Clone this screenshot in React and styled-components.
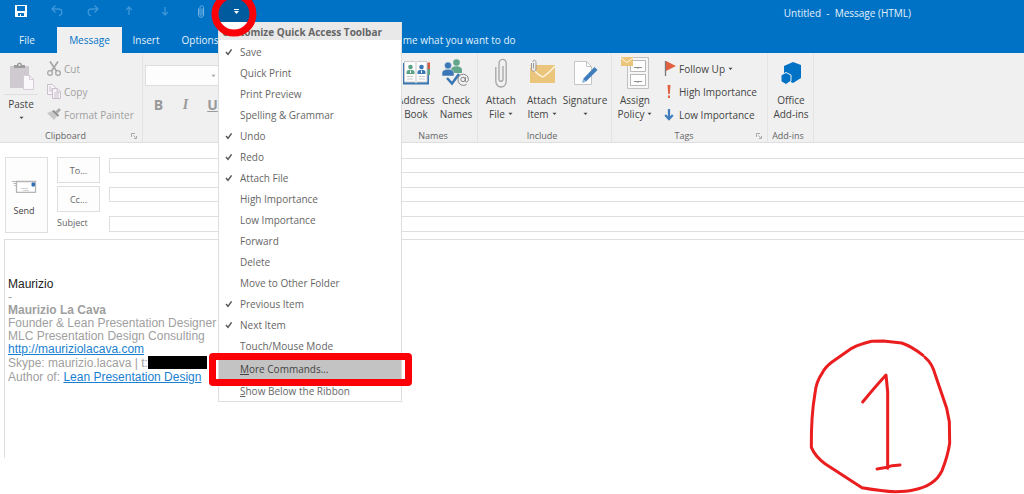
/**
 * Message Window
 * Compose window with the ribbon, address fields and the quick access menu open
 */
import React, { useState } from 'react';
import styled, { createGlobalStyle, ThemeProvider, css } from 'styled-components';

const theme = {
  colors: {
    blue: '#0072c6',
    blueDark: '#005a9e',
    ribbon: '#f0f0f0',
    line: '#dedede',
    text: '#444',
    muted: '#666',
    disabled: '#a0a0a0',
    link: '#1a7fd0',
    mark: '#fb0007',
  },
  fontSize: {
    sm: '9px',
    base: '10px',
  },
  font: '"Open Sans", "Noto Sans", sans-serif',
};

const GlobalStyle = createGlobalStyle`
  * {
    box-sizing: border-box;
  }

  body {
    margin: 0;
    background: #fff;
    font-family: ${props => props.theme.font};
    font-size: ${props => props.theme.fontSize.base};
    color: ${props => props.theme.colors.text};
  }

  button, input, select {
    font: inherit;
    color: inherit;
    margin: 0;
    padding: 0;
  }

  button {
    border: 0;
    background: none;
  }

  svg {
    display: block;
    flex: none;
  }
`;

const Page = styled.div`
  position: relative;
  display: flex;
  flex-direction: column;
  min-height: 100vh;
  padding-bottom: 36px;
  overflow: hidden;
`;

const TitleBar = styled.header`
  display: flex;
  height: 27px;
  padding-left: 3px;
  background: ${props => props.theme.colors.blue};
`;

const QuickButton = styled.button`
  display: flex;
  align-items: center;
  justify-content: center;
  width: 36px;
  height: 22px;
  color: ${props => (props.$dim ? '#3d97d9' : '#fff')};
`;

const MenuAnchor = styled.div`
  position: relative;
  z-index: 2;
`;

const MenuToggle = styled(QuickButton)`
  width: 34px;
  background: ${props => props.theme.colors.blueDark};
`;

const WindowTitle = styled.h1`
  margin: 0 113px 0 auto;
  font-size: ${props => props.theme.fontSize.base};
  line-height: 26px;
  font-weight: 400;
  color: #e4f1fb;
  white-space: pre;
`;

const Menu = styled.div`
  position: absolute;
  top: 22px;
  left: -1px;
  width: 184px;
  background: #fff;
  border: 1px solid ${props => props.theme.colors.line};
  border-top: 0;
`;

const MenuHeading = styled.div`
  height: 18px;
  margin-bottom: 1px;
  padding-left: 3px;
  background: #e9e9e9;
  font-weight: 700;
  line-height: 20px;
  white-space: nowrap;
  color: ${props => props.theme.colors.muted};
`;

const MenuItem = styled.button`
  position: relative;
  display: grid;
  grid-template-columns: 21px 1fr;
  align-items: center;
  width: 100%;
  height: 21px;
  text-align: left;
  color: ${props => props.theme.colors.muted};

  svg {
    margin-left: 6px;
  }

  span {
    grid-column: 2;
  }

  ${props => props.$active && css`
    margin: 3px 0 1px;
    height: 20px;
    background: #c3c3c3;
    color: #444;
  `}
`;

const MarkBox = styled.i`
  position: absolute;
  inset: -6px -11px -7px -10px;
  border: 7px solid ${props => props.theme.colors.mark};
  border-radius: 4px;
`;

const MarkRing = styled.svg`
  position: absolute;
  top: -9px;
  left: -8px;
  pointer-events: none;
`;

const Tabs = styled.nav`
  display: flex;
  height: 26px;
  padding-left: 7px;
  background: ${props => props.theme.colors.blue};
`;

const Tab = styled.button`
  width: ${props => props.$width}px;
  line-height: 26px;
  color: ${props => (props.$active ? props.theme.colors.blue : '#e4f1fb')};
  background: ${props => (props.$active ? props.theme.colors.ribbon : 'transparent')};

  &:first-child {
    margin-right: 10px;
  }
`;

const TellMe = styled.button`
  margin-left: 154px;
  line-height: 26px;
  white-space: nowrap;
  color: #e4f1fb;
`;

const RibbonBar = styled.section`
  display: flex;
  height: 90px;
  background: ${props => props.theme.colors.ribbon};
  border-bottom: 1px solid ${props => props.theme.colors.line};
`;

const Group = styled.div`
  display: flex;
  flex-direction: column;
  flex: none;
  width: ${props => props.$width}px;
  padding-top: 4px;
  border-right: 1px solid #e4e4e4;
`;

const GroupBody = styled.div`
  display: flex;
  flex: 1;
  padding: 0 2px;
`;

const GroupFooter = styled.div`
  display: flex;
  align-items: center;
  height: 13px;
  padding-right: 5px;
  font-size: ${props => props.theme.fontSize.sm};
  line-height: 13px;
  color: ${props => props.theme.colors.muted};

  span {
    flex: 1;
    text-align: center;
  }
`;

const BigButton = styled.button`
  display: flex;
  flex-direction: column;
  align-items: center;
  flex: none;
  width: ${props => props.$width || 42}px;
  line-height: 14px;
  white-space: nowrap;
`;

const IconBox = styled.span`
  display: flex;
  align-items: center;
  height: 32px;
  margin-bottom: 4px;
`;

const PasteButton = styled(BigButton)`
  ${IconBox} {
    height: 37px;
    margin-bottom: 0;
  }

  hr {
    width: 34px;
    margin: 0 0 2px;
    border: 0;
    border-top: 1px solid ${props => props.theme.colors.line};
  }
`;

const LabelLine = styled.span`
  display: flex;
  align-items: center;
  justify-content: center;
  gap: 3px;
  min-height: 14px;
`;

const SmallStack = styled.div`
  display: flex;
  flex-direction: column;
  padding-left: ${props => props.$indent}px;
`;

const SmallButton = styled.button`
  display: flex;
  align-items: center;
  gap: 3px;
  height: 23px;
  white-space: nowrap;
  color: ${props => (props.$disabled ? props.theme.colors.disabled : 'inherit')};
`;

const TextTools = styled.div`
  display: flex;
  flex-direction: column;
  padding-top: 8px;
`;

const FontSelect = styled.select`
  width: 86px;
  height: 21px;
  appearance: none;
  background: #fdfdfd;
  border: 1px solid ${props => props.theme.colors.line};
  border-radius: 0;
`;

const FontPicker = styled.div`
  display: grid;
  align-items: center;

  > * {
    grid-area: 1 / 1;
  }

  svg {
    margin-left: 66px;
    color: ${props => props.theme.colors.disabled};
  }
`;

const FormatRow = styled.div`
  display: flex;
  margin-top: 7px;

  button {
    width: 27px;
    font-size: 14px;
    font-weight: 700;
    line-height: 22px;
    color: #999;
  }

  i {
    font-family: "Liberation Serif", serif;
  }
`;

const Compose = styled.form`
  display: grid;
  grid-template-columns: 43px 43px 1fr;
  column-gap: 9px;
  padding: 14px 0 6px 5px;
`;

const outlined = css`
  background: #fdfdfd;
  border: 1px solid ${props => props.theme.colors.line};
`;

const SendButton = styled.button`
  ${outlined}
  display: flex;
  flex-direction: column;
  align-items: center;
  gap: 11px;
  height: 76px;
  padding-top: 22px;
  padding-right: 5px;
  font-size: ${props => props.theme.fontSize.sm};
  line-height: 14px;
`;

const Labels = styled.div`
  display: grid;
  grid-template-rows: 26px 26px 16px;
  row-gap: 3px;
`;

const FieldButton = styled.button`
  ${outlined}
  font-size: ${props => props.theme.fontSize.sm};
  color: ${props => props.theme.colors.muted};
`;

const FieldLabel = styled.label`
  font-size: ${props => props.theme.fontSize.sm};
  line-height: 16px;
  color: ${props => props.theme.colors.muted};
`;

const Fields = styled.div`
  display: grid;
  grid-template-rows: 15px 15px 16px;
  row-gap: 14px;
  padding-top: 1px;
`;

const Field = styled.input`
  width: 100%;
  min-width: 0;
  height: 100%;
  background: #fff;
  border: 1px solid ${props => props.theme.colors.line};
  border-right: 0;
  outline: none;
`;

const MessageBody = styled.main`
  flex: 1;
  margin-left: 4px;
  padding: 37px 0 0 3px;
  border: 1px solid ${props => props.theme.colors.line};
  border-width: 1px 0 0 1px;
  font-family: "Liberation Sans", Arial, sans-serif;
  font-size: 12px;
  line-height: 13px;
  color: #a0a0a0;

  p {
    margin: 0;
  }

  a {
    color: ${props => props.theme.colors.link};
  }
`;

const Greeting = styled.p`
  color: #222;
  line-height: 14px;
`;

const ContactLine = styled.p`
  line-height: 14px;
`;

const Redacted = styled.span`
  display: inline-block;
  width: 59px;
  height: 13px;
  background: #000;
  vertical-align: top;
`;

const PenDrawing = styled.svg`
  position: absolute;
  top: 320px;
  left: 790px;
  pointer-events: none;
`;

const Caret = () => (
  <svg width="5" height="4" viewBox="0 0 5 4" aria-hidden="true">
    <path d="M0.5 0.8h4L2.5 3z" fill="currentColor" />
  </svg>
);

const MenuCaret = () => (
  <svg width="5" height="5" viewBox="0 0 5 5" aria-hidden="true">
    <path d="M0 0h5v1H0zM0 2h5L2.500 5z" fill="#fff" />
  </svg>
);

const Check = () => (
  <svg width="8" height="8" viewBox="0 0 8 8" fill="none" stroke="#555" strokeWidth="1.5" aria-hidden="true">
    <path d="M1 4l2 2.4L6.6 1.4" />
  </svg>
);

const Launcher = () => (
  <svg width="6" height="6" viewBox="0 0 6 6" fill="none" stroke="#a8a8a8" aria-hidden="true">
    <path d="M0.5 4V0.5H4M2.5 2.5l2 2M5.5 3v2.5H3" />
  </svg>
);

const SaveIcon = () => (
  <svg width="12" height="12" viewBox="0 0 12 12" aria-hidden="true">
    <path fillRule="evenodd" d="M0 0h12v12H0zM2 1v5h8V1zM3 8v3h2V9h1v2h3V8z" fill="#fff" />
  </svg>
);

const UndoIcon = ({ flip }) => (
  <svg width="12" height="12" viewBox="0 0 12 12" fill="none" stroke="currentColor" strokeWidth="1.3" aria-hidden="true">
    <g transform={flip ? 'matrix(-1 0 0 1 12 0)' : undefined}>
      <path d="M4.5 0.5L1 4l3.5 3.5M1 4h6c5 0 5 5 1 7" />
    </g>
  </svg>
);

const ArrowIcon = ({ down }) => (
  <svg width="8" height="10" viewBox="0 0 8 10" fill="none" stroke="currentColor" strokeWidth="1.3" aria-hidden="true">
    <path d={down ? 'M4 1v8M1.2 6L4 9l2.8-3' : 'M4 9V1M1.2 4L4 1l2.8 3'} />
  </svg>
);

const SmallClipIcon = () => (
  <svg width="6" height="13" viewBox="0 0 6 13" fill="none" stroke="#6fb2e3" aria-hidden="true">
    <path d="M4 3.5v5.8a1 1 0 01-2 0V2.4C2 .2 5.5.2 5.5 2.4V10c0 3-5 3-5 0V3.5" />
  </svg>
);

const PasteIcon = () => (
  <svg width="26" height="28" viewBox="0 0 26 28" aria-hidden="true">
    <path d="M2 4h19v22H2z" fill="#cfcacf" />
    <path d="M6 6V3h3c0-3.500 5-3.500 5 0h3v3z" fill="#9c9c9c" />
    <circle cx="11.500" cy="3" r="1" fill="#f0f0f0" />
    <path d="M15.500 13.500h6l4 4v10h-10z" fill="#fbf8fc" stroke="#d4ccd6" />
    <path d="M21.500 13.500v4h4" fill="none" stroke="#d4ccd6" />
  </svg>
);

const CutIcon = () => (
  <svg width="14" height="15" viewBox="0 0 14 15" fill="none" stroke="#a6a6a6" strokeWidth="1.3" aria-hidden="true">
    <path d="M3 0.500l6.500 9.500M11 0.500L4.500 10" strokeWidth="1.700" />
    <circle cx="3" cy="12" r="2.300" />
    <circle cx="11" cy="12" r="2.300" />
  </svg>
);

const CopyIcon = () => (
  <svg width="14" height="15" viewBox="0 0 14 15" fill="#f7f3f8" stroke="#c9c0cb" aria-hidden="true">
    <path d="M0.500 0.500h5l3 3v7h-8z" />
    <path d="M2 5h4M2 7h4M2 3h2" />
    <path d="M5.500 4.500h5l3 3v7h-8z" />
    <path d="M7 9h5M7 11h5M7 13h5M10 5v3h3" />
  </svg>
);

const PainterIcon = () => (
  <svg width="14" height="13" viewBox="0 0 14 13" aria-hidden="true">
    <path d="M0 5l5-2 5 5-3 4z" fill="#c8c8c8" />
    <path d="M5 3l2-1 5 5-1 2z" fill="#8f8f8f" />
    <path d="M8.500 3.500L12 0l2 2-3.500 3.500z" fill="#aaa" />
  </svg>
);

const AddressIcon = () => (
  <svg width="28" height="26" viewBox="0 0 28 26" aria-hidden="true">
    <path d="M1 3h26v21.500H1z" fill="#3a78b5" />
    <path d="M25.500 2.500H28V9h-2.500z" fill="#dd5a3c" />
    <path d="M25.500 9H28v6h-2.500z" fill="#5aa384" />
    <path d="M2.500 1.500h10l1.500 1 1.500-1h9.500v20.500h-9.500l-1.500 1-1.500-1h-10z" fill="#fdfdfd" stroke="#c9c9c9" />
    <path d="M14 3v20M5 16.500h6M5 19h6M17 16.500h6M17 19h6" stroke="#c9c9c9" />
    <circle cx="8.500" cy="7" r="2.300" fill="#5aa384" />
    <path d="M4.500 14v-2c0-3 8-3 8 0v2z" fill="#5aa384" />
    <circle cx="19.500" cy="7" r="2.300" fill="#3a78b5" />
    <path d="M15.500 14v-2c0-3 8-3 8 0v2z" fill="#3a78b5" />
    <path d="M8 10.500h1V13H8zM19 10.500h1V13h-1z" fill="#fff" />
  </svg>
);

const CheckNamesIcon = () => (
  <svg width="28" height="28" viewBox="0 0 28 28" aria-hidden="true">
    <circle cx="14.500" cy="3.500" r="3.300" fill="#62a68b" />
    <path d="M9 14v-3c0-5 11-5 11 0v3z" fill="#62a68b" />
    <circle cx="6" cy="6.500" r="3.500" fill="#3a78b5" stroke="#f0f0f0" strokeWidth="0.500" />
    <path d="M0 17v-3c0-5 12-5 12 0v3z" fill="#3a78b5" stroke="#f0f0f0" strokeWidth="0.500" />
    <path d="M5 19l5 5.500L17 15" fill="none" stroke="#3a78b5" strokeWidth="2.600" />
    <g fill="none" stroke="#858585">
      <circle cx="21" cy="20.500" r="2.200" />
      <path d="M23.400 18v4c0 2 3 1 3-1.500 0-7-10.400-7-10.400 0 0 5.500 5 7 8.500 5" />
    </g>
  </svg>
);

const ClipIcon = () => (
  <svg width="12" height="30" viewBox="0 0 12 30" fill="none" stroke="#a5a5a5" strokeWidth="1.300" aria-hidden="true">
    <path d="M8 8v13c0 3-4 3-4 0V6c0-6 7.200-6 7.200-1v18c0 8-10.400 8-10.400 0V9" />
  </svg>
);

const ItemIcon = () => (
  <svg width="26" height="28" viewBox="0 0 26 28" aria-hidden="true">
    <path d="M1 6h25v18H1z" fill="#ecc57c" />
    <path d="M1 7q8 9 12.500 11Q18 16 26 7" fill="none" stroke="#fff7e6" strokeWidth="1.300" />
    <path d="M2.500 1.500h4v10h-4z" fill="#f0f0f0" />
    <path d="M4.500 4v5.500M2.500 4v6c0 3 4.500 3 4.500 0V3.500c0-3-3-3-3-.5" fill="none" stroke="#999" />
  </svg>
);

const SignatureIcon = () => (
  <svg width="26" height="28" viewBox="0 0 26 28" aria-hidden="true">
    <path d="M2.500 2.500h12l5 5v18h-17z" fill="#fdfdfd" stroke="#c6c6c6" />
    <path d="M14.500 2.500v5h5" fill="none" stroke="#c6c6c6" />
    <path d="M11 20l11.500-12 3 3L14 22.500z" fill="#3f7dbc" />
    <path d="M10 24l1-4 3 2.500z" fill="#8ab0d8" />
  </svg>
);

const PolicyIcon = () => (
  <svg width="28" height="32" viewBox="0 0 28 32" aria-hidden="true">
    <path d="M6.500 .5h21v31h-21z" fill="#f5f5f5" stroke="#c2c2c2" />
    <path d="M9.500 3.500h15v11h-15zM9.500 17.500h15v11h-15z" fill="#fff" stroke="#b9b9b9" />
    <path d="M13 10.500h8M17 10.500v1.500M13 24.500h8M17 24.500v1.500" stroke="#8e8e8e" />
    <path d="M0 0h12v9H0z" fill="#ecc57c" />
    <path d="M0 1l6 4.500L12 1" fill="none" stroke="#fff7e6" />
  </svg>
);

const FlagIcon = () => (
  <svg width="12" height="15" viewBox="0 0 12 15" aria-hidden="true">
    <path d="M1.500 0v15" stroke="#777" strokeWidth="1.300" />
    <path d="M2 0l10 5-10 5z" fill="#e0603f" />
  </svg>
);

const HighIcon = () => (
  <svg width="12" height="13" viewBox="0 0 12 13" fill="#e0603f" aria-hidden="true">
    <path d="M3.500 0h3L5.800 9H4.200zM4 10.500h2V13H4z" />
  </svg>
);

const LowIcon = () => (
  <svg width="12" height="12" viewBox="0 0 12 12" fill="none" stroke="#3f7dbc" strokeWidth="2.200" aria-hidden="true">
    <path d="M5 0v10M1.200 6L5 10.200 8.800 6" />
  </svg>
);

const OfficeIcon = () => (
  <svg width="22" height="28" viewBox="0 0 22 28" fill="#0072c6" aria-hidden="true">
    <path d="M13 3l8 3v13l-8 5-9-4V7z" />
    <path d="M6 13.500l5 2.500v6L6 25.500 1 22.500V16z" stroke="#f0f0f0" />
  </svg>
);

const SendIcon = () => (
  <svg width="25" height="13" viewBox="0 0 25 13" fill="none" stroke="#b5b5b5" aria-hidden="true">
    <path d="M4.500 1.500h19v11h-19z" fill="#fff" strokeWidth="1.300" />
    <path d="M0 1.500h4M1.500 3.500H4M2.500 5.500H4" />
    <path d="M9 8.500h7M11 10.500h6" stroke="#cfcfcf" />
    <path d="M20 3h2.500v3H20z" fill="#2f6fb5" stroke="#2f6fb5" />
  </svg>
);

const menuItems = [
  { label: 'Save', checked: true },
  { label: 'Quick Print' },
  { label: 'Print Preview' },
  { label: 'Spelling & Grammar' },
  { label: 'Undo', checked: true },
  { label: 'Redo', checked: true },
  { label: 'Attach File', checked: true },
  { label: 'High Importance' },
  { label: 'Low Importance' },
  { label: 'Forward' },
  { label: 'Delete' },
  { label: 'Move to Other Folder' },
  { label: 'Previous Item', checked: true },
  { label: 'Next Item', checked: true },
  { label: 'Touch/Mouse Mode' },
];

const QuickAccessMenu = () => (
  <Menu role="menu">
    <MenuHeading>Customize Quick Access Toolbar</MenuHeading>
    {menuItems.map(item => (
      <MenuItem key={item.label} role="menuitemcheckbox" aria-checked={!!item.checked}>
        {item.checked && <Check />}
        <span>{item.label}</span>
      </MenuItem>
    ))}
    <MenuItem role="menuitem" $active>
      <span><u>M</u>ore Commands...</span>
      <MarkBox />
    </MenuItem>
    <MenuItem role="menuitem">
      <span><u>S</u>how Below the Ribbon</span>
    </MenuItem>
  </Menu>
);

const Ribbon = () => (
  <RibbonBar>
    <Group $width={143}>
      <GroupBody>
        <PasteButton $width={38}>
          <IconBox><PasteIcon /></IconBox>
          <hr />
          <span>Paste</span>
          <LabelLine><Caret /></LabelLine>
        </PasteButton>
        <SmallStack $indent={7}>
          <SmallButton $disabled><CutIcon />Cut</SmallButton>
          <SmallButton $disabled><CopyIcon />Copy</SmallButton>
          <SmallButton $disabled><PainterIcon />Format Painter</SmallButton>
        </SmallStack>
      </GroupBody>
      <GroupFooter><span>Clipboard</span><Launcher /></GroupFooter>
    </Group>

    <Group $width={251}>
      <GroupBody>
        <TextTools>
          <FontPicker>
            <FontSelect aria-label="Font" />
            <Caret />
          </FontPicker>
          <FormatRow>
            <button aria-label="Bold">B</button>
            <button aria-label="Italic"><i>I</i></button>
            <button aria-label="Underline"><u>U</u></button>
          </FormatRow>
        </TextTools>
      </GroupBody>
    </Group>

    <Group $width={84}>
      <GroupBody>
        <BigButton $width={40}>
          <IconBox><AddressIcon /></IconBox>
          <span>Address</span>
          <span>Book</span>
        </BigButton>
        <BigButton $width={40}>
          <IconBox><CheckNamesIcon /></IconBox>
          <span>Check</span>
          <span>Names</span>
        </BigButton>
      </GroupBody>
      <GroupFooter><span>Names</span></GroupFooter>
    </Group>

    <Group $width={134}>
      <GroupBody>
        <BigButton $width={42}>
          <IconBox><ClipIcon /></IconBox>
          <span>Attach</span>
          <LabelLine>File <Caret /></LabelLine>
        </BigButton>
        <BigButton $width={40}>
          <IconBox><ItemIcon /></IconBox>
          <span>Attach</span>
          <LabelLine>Item <Caret /></LabelLine>
        </BigButton>
        <BigButton $width={46}>
          <IconBox><SignatureIcon /></IconBox>
          <span>Signature</span>
          <LabelLine><Caret /></LabelLine>
        </BigButton>
      </GroupBody>
      <GroupFooter><span>Include</span></GroupFooter>
    </Group>

    <Group $width={156}>
      <GroupBody>
        <BigButton $width={42}>
          <IconBox><PolicyIcon /></IconBox>
          <span>Assign</span>
          <LabelLine>Policy <Caret /></LabelLine>
        </BigButton>
        <SmallStack $indent={8}>
          <SmallButton><FlagIcon />Follow Up <Caret /></SmallButton>
          <SmallButton><HighIcon />High Importance</SmallButton>
          <SmallButton><LowIcon />Low Importance</SmallButton>
        </SmallStack>
      </GroupBody>
      <GroupFooter><span>Tags</span><Launcher /></GroupFooter>
    </Group>

    <Group $width={46}>
      <GroupBody>
        <BigButton $width={42}>
          <IconBox><OfficeIcon /></IconBox>
          <span>Office</span>
          <span>Add-ins</span>
        </BigButton>
      </GroupBody>
      <GroupFooter><span>Add-ins</span></GroupFooter>
    </Group>
  </RibbonBar>
);

const App = () => {
  const [menuOpen, setMenuOpen] = useState(true);

  return (
    <ThemeProvider theme={theme}>
      <GlobalStyle />
      <Page>
        <TitleBar>
          <QuickButton aria-label="Save"><SaveIcon /></QuickButton>
          <QuickButton aria-label="Undo" $dim><UndoIcon /></QuickButton>
          <QuickButton aria-label="Redo" $dim><UndoIcon flip /></QuickButton>
          <QuickButton aria-label="Previous item" $dim><ArrowIcon /></QuickButton>
          <QuickButton aria-label="Next item" $dim><ArrowIcon down /></QuickButton>
          <QuickButton aria-label="Attach file"><SmallClipIcon /></QuickButton>
          <MenuAnchor>
            <MenuToggle
              aria-label="Customize toolbar"
              aria-expanded={menuOpen}
              onClick={() => setMenuOpen(!menuOpen)}
            >
              <MenuCaret />
            </MenuToggle>
            {menuOpen && <QuickAccessMenu />}
            <MarkRing width="46" height="46" viewBox="0 0 46 46" aria-hidden="true">
              <path d="M7 31h32a18 18 0 01-32 0z" fill="#fff" />
              <circle cx="23" cy="23" r="19" fill="none" stroke="#fb0007" strokeWidth="7" />
            </MarkRing>
          </MenuAnchor>
          <WindowTitle>{'Untitled  -  Message (HTML)'}</WindowTitle>
        </TitleBar>

        <Tabs>
          <Tab $width={40}>File</Tab>
          <Tab $width={65} $active>Message</Tab>
          <Tab $width={48}>Insert</Tab>
          <Tab $width={60}>Options</Tab>
          <TellMe>Tell me what you want to do</TellMe>
        </Tabs>

        <Ribbon />

        <Compose onSubmit={e => e.preventDefault()}>
          <SendButton type="submit"><SendIcon />Send</SendButton>
          <Labels>
            <FieldButton type="button">To...</FieldButton>
            <FieldButton type="button">Cc...</FieldButton>
            <FieldLabel htmlFor="subject">Subject</FieldLabel>
          </Labels>
          <Fields>
            <Field aria-label="To" />
            <Field aria-label="Cc" />
            <Field id="subject" />
          </Fields>
        </Compose>

        <MessageBody>
          <Greeting>Maurizio</Greeting>
          <p>-</p>
          <p><strong>Maurizio La Cava</strong></p>
          <p>Founder &amp; Lean Presentation Designer</p>
          <p>MLC Presentation Design Consulting</p>
          <p><a href="http://mauriziolacava.com">http://mauriziolacava.com</a></p>
          <ContactLine>Skype: maurizio.lacava | t:<Redacted /></ContactLine>
          <ContactLine>Author of: <a href="#book">Lean Presentation Design</a></ContactLine>
        </MessageBody>

        <PenDrawing width="190" height="174" viewBox="0 0 570 522" fill="none" stroke="#ea1d1f" strokeWidth="9" strokeLinecap="round" strokeLinejoin="round" aria-hidden="true">
          <path d="M399 106Q365 79 335 69L280 63 245 64Q210 72 185 85L126 126Q106 141 98 157 78 185 75 220 63 290 64 382 76 410 105 431L216 503Q280 514 315 515 350 515 370 510 435 498 456 452 473 410 479 370L478 305 470 265 436 165Q427 130 405 112" />
          <path d="M218 246Q260 195 288 165L293 215V445M261 447Q285 445 307 437L330 435" />
        </PenDrawing>
      </Page>
    </ThemeProvider>
  );
};

export default App;
